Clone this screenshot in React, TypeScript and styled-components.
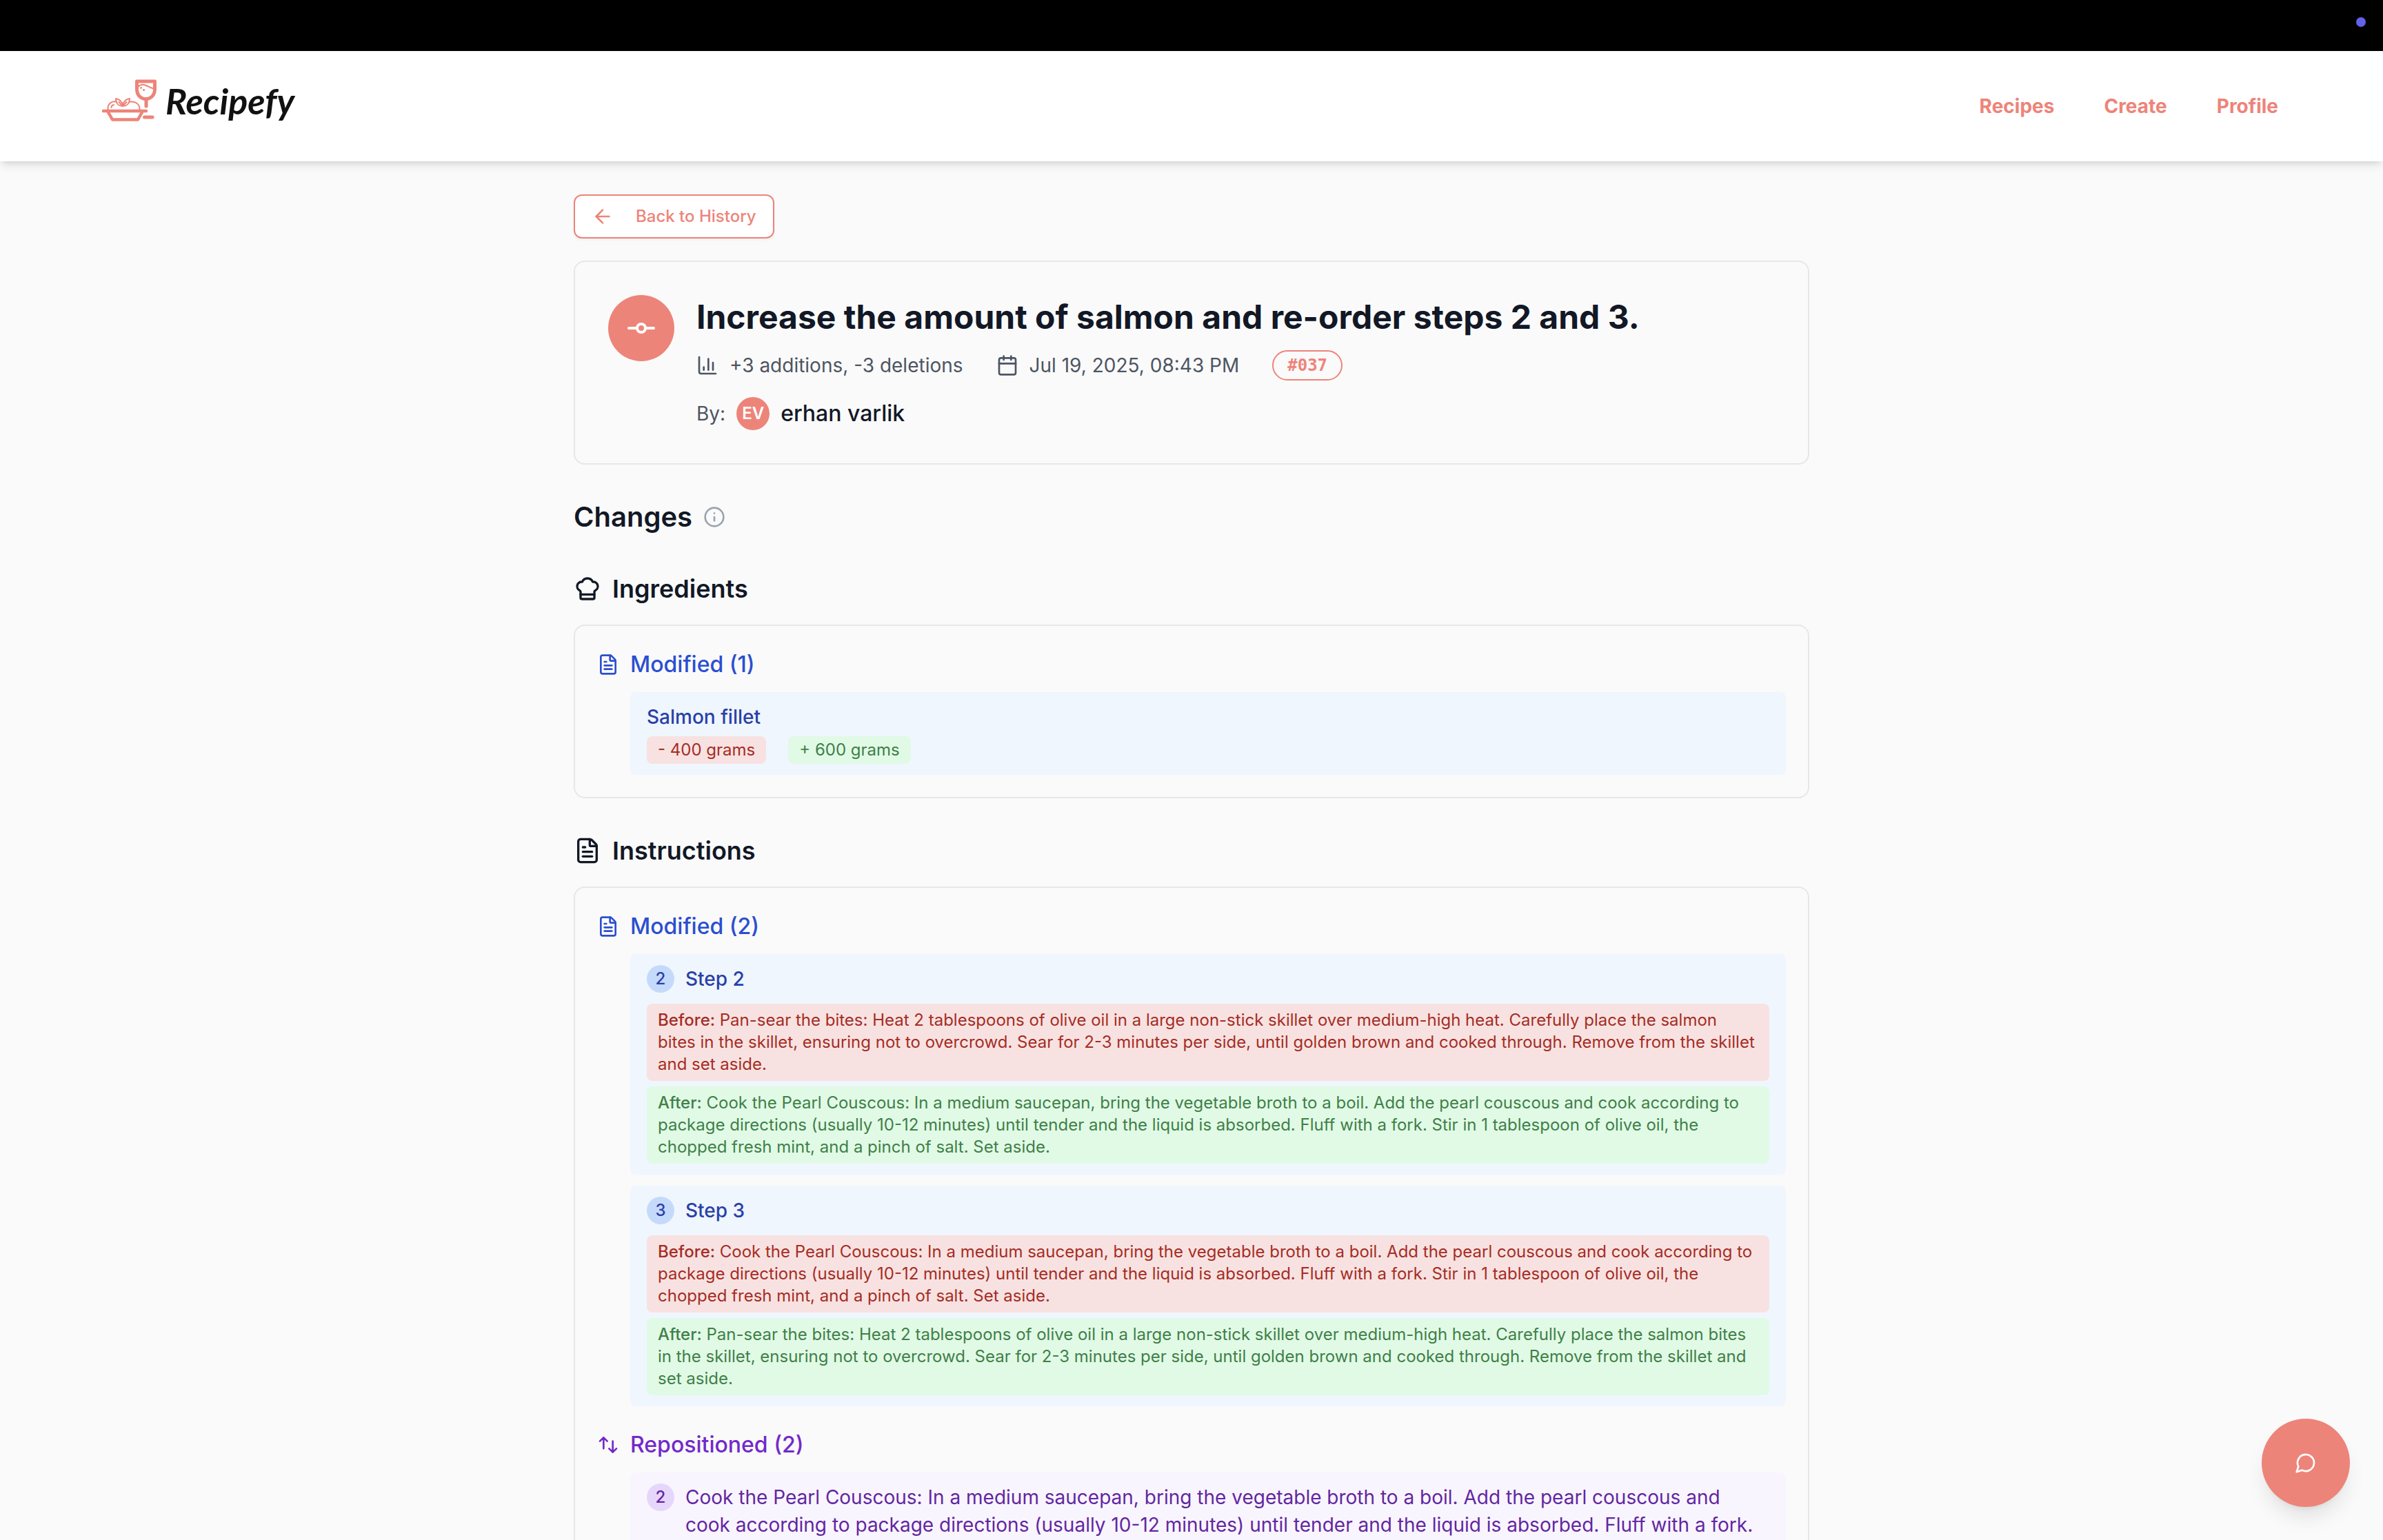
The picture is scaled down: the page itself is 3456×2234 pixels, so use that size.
import React from "react";
import styled, { createGlobalStyle } from "styled-components";
import {
  ArrowLeft,
  Calendar,
  ChartColumn,
  ChefHat,
  FileText,
  GitCommitHorizontal,
  Info,
} from "lucide-react";

const coral = "#ed8479";
const ink = "#121826";
const slate = "#4d5562";
const line = "#e5e7eb";

type Tone = "blue" | "purple";

const tones = {
  blue: { title: "#2b4fd0", text: "#2a40a8", panel: "#eff6fe", dot: "#c5dafb" },
  purple: { title: "#7329c9", text: "#6227a1", panel: "#f9f5fe", dot: "#e7d6fb" },
};

const diffs = {
  before: { text: "#a52d25", panel: "#f8e2e1" },
  after: { text: "#3f8048", panel: "#e1fae6" },
};

const GlobalStyle = createGlobalStyle`
  *, *::before, *::after { box-sizing: border-box; }
  body {
    margin: 0;
    background: #fafafa;
    color: ${ink};
    font-family: Inter, "Liberation Sans", sans-serif;
    -webkit-font-smoothing: antialiased;
  }
  h1, h2, h3, h4, p, ul { margin: 0; padding: 0; }
  svg { flex-shrink: 0; display: block; }
`;

const Shell = styled.div`
  height: 100vh;
  display: flex;
  flex-direction: column;
  overflow: hidden;
`;

const StatusBar = styled.div`
  flex-shrink: 0;
  height: 74px;
  padding: 25px 25px 0;
  display: flex;
  justify-content: flex-end;
  background: #000;
`;

const StatusDot = styled.span`
  width: 14px;
  height: 14px;
  border-radius: 50%;
  background: #6461e9;
`;

const Header = styled.header`
  flex-shrink: 0;
  height: 160px;
  padding: 0 152px 0 148px;
  display: flex;
  align-items: center;
  justify-content: space-between;
  background: #fff;
  box-shadow: 0 8px 12px -2px rgba(0, 0, 0, 0.1), 0 4px 8px -4px rgba(0, 0, 0, 0.1);
  z-index: 1;
`;

const Brand = styled.a`
  display: flex;
  align-items: center;
  gap: 12px;
  height: 96px;
  padding-bottom: 16px;
  color: #111;
  text-decoration: none;
`;

const Wordmark = styled.span`
  font: italic 700 52px/64px Lato, "Liberation Sans", sans-serif;
`;

const Nav = styled.nav`
  display: flex;
  gap: 72px;
`;

const NavLink = styled.a`
  color: ${coral};
  font-size: 28px;
  line-height: 40px;
  font-weight: 700;
  text-decoration: none;
`;

const Main = styled.main`
  width: 100%;
  max-width: 1792px;
  margin: 0 auto;
  padding: 48px 0;
`;

const BackButton = styled.button`
  display: inline-flex;
  align-items: center;
  gap: 32px;
  height: 64px;
  padding: 0 24px;
  border: 2px solid ${coral};
  border-radius: 12px;
  background: #fff;
  box-shadow: 0 2px 4px rgba(0, 0, 0, 0.05);
  color: ${coral};
  font: 500 24px/32px Inter, sans-serif;
`;

const Card = styled.section<{ $roomy?: boolean }>`
  display: flex;
  flex-direction: column;
  gap: 32px;
  padding: ${(p) => (p.$roomy ? 48 : 32)}px;
  border: 2px solid ${line};
  border-radius: 16px;
`;

const Summary = styled(Card)`
  flex-direction: row;
  margin-top: 32px;
`;

const CommitMark = styled.div`
  flex-shrink: 0;
  width: 96px;
  height: 96px;
  display: grid;
  place-items: center;
  border-radius: 50%;
  background: ${coral};
  color: #fff;
`;

const Title = styled.h1`
  font-size: 48px;
  line-height: 64px;
  font-weight: 700;
`;

const MetaRow = styled.div`
  display: flex;
  align-items: center;
  gap: 48px;
  margin: 16px 0 24px;
  color: ${slate};
  font-size: 28px;
  line-height: 40px;
`;

const MetaItem = styled.span`
  display: flex;
  align-items: center;
  gap: 16px;
`;

const Tag = styled.span`
  height: 44px;
  padding: 4px 20px;
  border: 2px solid ${coral};
  border-radius: 22px;
  color: ${coral};
  font: 700 24px/32px "DejaVu Sans Mono", monospace;
`;

const AuthorRow = styled(MetaItem)`
  color: ${slate};
  font-size: 28px;
  line-height: 40px;
`;

const Avatar = styled.span`
  width: 48px;
  height: 48px;
  border-radius: 50%;
  background: ${coral};
  color: #fff;
  font-size: 24px;
  line-height: 48px;
  font-weight: 600;
  text-align: center;
`;

const AuthorName = styled.span`
  color: ${ink};
  font-size: 32px;
  line-height: 48px;
  font-weight: 500;
`;

const Heading = styled.h2`
  display: flex;
  align-items: center;
  gap: 16px;
  margin-top: 48px;
  font-size: 40px;
  line-height: 56px;
  font-weight: 600;

  svg { color: #9ca3af; }
`;

const SectionHeading = styled.h3`
  display: flex;
  align-items: center;
  gap: 16px;
  margin: 48px 0 24px;
  font-size: 36px;
  line-height: 56px;
  font-weight: 600;
`;

const GroupTitle = styled.h4<{ $tone: Tone }>`
  display: flex;
  align-items: center;
  gap: 16px;
  color: ${(p) => tones[p.$tone].title};
  font-size: 32px;
  line-height: 48px;
  font-weight: 500;
`;

const GroupList = styled.ul`
  display: flex;
  flex-direction: column;
  gap: 16px;
  margin: 16px 0 0 48px;
  list-style: none;
`;

const Entry = styled.li<{ $tone: Tone }>`
  display: flex;
  flex-direction: column;
  gap: 8px;
  padding: 16px 24px;
  border-radius: 8px;
  background: ${(p) => tones[p.$tone].panel};
  color: ${(p) => tones[p.$tone].text};
  font-size: 28px;
  line-height: 40px;
`;

const EntryName = styled.p`
  font-weight: 500;
`;

const StepRow = styled.div<{ $spaced?: boolean }>`
  display: flex;
  align-items: flex-start;
  gap: 16px;
  margin-bottom: ${(p) => (p.$spaced ? 8 : 0)}px;
`;

const StepNumber = styled.span<{ $tone: Tone }>`
  flex-shrink: 0;
  width: 40px;
  height: 40px;
  border-radius: 50%;
  background: ${(p) => tones[p.$tone].dot};
  font-size: 24px;
  font-weight: 500;
  text-align: center;
`;

const Chips = styled.div`
  display: flex;
  gap: 32px;
`;

const Chip = styled.span<{ $kind: "before" | "after" }>`
  padding: 4px 16px;
  border-radius: 8px;
  background: ${(p) => diffs[p.$kind].panel};
  color: ${(p) => diffs[p.$kind].text};
  font-size: 24px;
  line-height: 32px;
`;

const DiffText = styled.p<{ $kind: "before" | "after" }>`
  padding: 8px 16px;
  border-radius: 8px;
  background: ${(p) => diffs[p.$kind].panel};
  color: ${(p) => diffs[p.$kind].text};
  font-size: 24px;
  line-height: 32px;

  b { font-weight: 500; }
`;

const ChatButton = styled.button`
  position: fixed;
  right: 48px;
  bottom: 48px;
  width: 128px;
  height: 128px;
  display: grid;
  place-items: center;
  padding: 0;
  border: 0;
  border-radius: 50%;
  background: ${coral};
  color: #fff;
  box-shadow: 0 20px 30px -6px rgba(0, 0, 0, 0.1), 0 8px 12px -8px rgba(0, 0, 0, 0.1);
`;

const sear =
  "Pan-sear the bites: Heat 2 tablespoons of olive oil in a large non-stick skillet over medium-high heat. Carefully place the salmon bites in the skillet, ensuring not to overcrowd. Sear for 2-3 minutes per side, until golden brown and cooked through. Remove from the skillet and set aside.";
const couscous =
  "Cook the Pearl Couscous: In a medium saucepan, bring the vegetable broth to a boil. Add the pearl couscous and cook according to package directions (usually 10-12 minutes) until tender and the liquid is absorbed. Fluff with a fork. Stir in 1 tablespoon of olive oil, the chopped fresh mint, and a pinch of salt. Set aside.";

const steps = [
  { number: 2, before: sear, after: couscous },
  { number: 3, before: couscous, after: sear },
];

const StrokeIcon = ({ d }: { d: string }) => (
  <svg width="32" height="32" viewBox="0 0 24 24" fill="none" stroke="currentColor" strokeWidth="2" strokeLinecap="round" strokeLinejoin="round" aria-hidden="true">
    <path d={d} />
  </svg>
);

const Logo = () => (
  <svg width="80" height="62" viewBox="0 0 80 62" fill="none" stroke={coral} strokeLinecap="round" strokeLinejoin="round" aria-hidden="true">
    <path d="M50.500 3H76.500V14C76.500 23 71 28.500 63.500 28.500S50.500 23 50.500 14Z" strokeWidth="5" />
    <path d="M52 11C57 6 61 7.500 65 9.500S71 13 75 13.500" strokeWidth="2" />
    <path d="M64 30V39" strokeWidth="5" />
    <path d="M61.500 55H73" strokeWidth="5" />
    <circle cx="56.500" cy="12.500" r="1.400" fill={coral} stroke="none" />
    <circle cx="60.500" cy="15.500" r="1.600" fill={coral} stroke="none" />
    <path d="M2 46H64" strokeWidth="4.500" />
    <path d="M9 48L15 58.500H52L58 48" strokeWidth="4.500" />
    <path d="M8.500 44C8 36 13 31 21 32.500M39 33C48 31 55 36 54.500 44" strokeWidth="2" />
    <path d="M13.500 41C13.500 39 15 37.500 17 37" strokeWidth="2" />
    <path d="M30 39C25 39 20 36 20 28C26 29 29 32 30 38C31 32 34 29 40 28C40 36 35 39 30 39ZM24.500 33L28.500 37.500M35.500 33L31.500 37.500" strokeWidth="2" />
  </svg>
);

export default function App() {
  return (
    <>
      <GlobalStyle />
      <Shell>
        <StatusBar>
          <StatusDot />
        </StatusBar>
        <Header>
          <Brand href="#home">
            <Logo />
            <Wordmark>Recipefy</Wordmark>
          </Brand>
          <Nav>
            <NavLink href="#recipes">Recipes</NavLink>
            <NavLink href="#create">Create</NavLink>
            <NavLink href="#profile">Profile</NavLink>
          </Nav>
        </Header>
        <Main>
          <BackButton type="button">
            <ArrowLeft size={32} />
            Back to History
          </BackButton>
          <Summary $roomy>
            <CommitMark>
              <GitCommitHorizontal size={48} />
            </CommitMark>
            <div>
              <Title>Increase the amount of salmon and re-order steps 2 and 3.</Title>
              <MetaRow>
                <MetaItem>
                  <ChartColumn size={32} />
                  +3 additions, -3 deletions
                </MetaItem>
                <MetaItem>
                  <Calendar size={32} />
                  Jul 19, 2025, 08:43 PM
                </MetaItem>
                <Tag>#037</Tag>
              </MetaRow>
              <AuthorRow>
                By:
                <Avatar>EV</Avatar>
                <AuthorName>erhan varlik</AuthorName>
              </AuthorRow>
            </div>
          </Summary>

          <Heading>
            Changes
            <Info size={32} />
          </Heading>

          <SectionHeading>
            <ChefHat size={40} />
            Ingredients
          </SectionHeading>
          <Card>
            <div>
              <GroupTitle $tone="blue">
                <FileText size={32} />
                Modified (1)
              </GroupTitle>
              <GroupList>
                <Entry $tone="blue">
                  <EntryName>Salmon fillet</EntryName>
                  <Chips>
                    <Chip $kind="before">- 400 grams</Chip>
                    <Chip $kind="after">+ 600 grams</Chip>
                  </Chips>
                </Entry>
              </GroupList>
            </div>
          </Card>

          <SectionHeading>
            <FileText size={40} />
            Instructions
          </SectionHeading>
          <Card>
            <div>
              <GroupTitle $tone="blue">
                <FileText size={32} />
                Modified (2)
              </GroupTitle>
              <GroupList>
                {steps.map((step) => (
                  <Entry $tone="blue" key={step.number}>
                    <StepRow $spaced>
                      <StepNumber $tone="blue">{step.number}</StepNumber>
                      <EntryName>Step {step.number}</EntryName>
                    </StepRow>
                    <DiffText $kind="before">
                      <b>Before:</b> {step.before}
                    </DiffText>
                    <DiffText $kind="after">
                      <b>After:</b> {step.after}
                    </DiffText>
                  </Entry>
                ))}
              </GroupList>
            </div>
            <div>
              <GroupTitle $tone="purple">
                <StrokeIcon d="M7 16V4m0 0L3 8m4-4l4 4m6 0v12m0 0l4-4m-4 4l-4-4" />
                Repositioned (2)
              </GroupTitle>
              <GroupList>
                <Entry $tone="purple">
                  <StepRow>
                    <StepNumber $tone="purple">2</StepNumber>
                    <p>{couscous}</p>
                  </StepRow>
                </Entry>
              </GroupList>
            </div>
          </Card>
        </Main>
        <ChatButton type="button" aria-label="Open chat">
          <StrokeIcon d="M7.9 20A9 9 0 1 0 4 16.100L2 22Z" />
        </ChatButton>
      </Shell>
    </>
  );
}
